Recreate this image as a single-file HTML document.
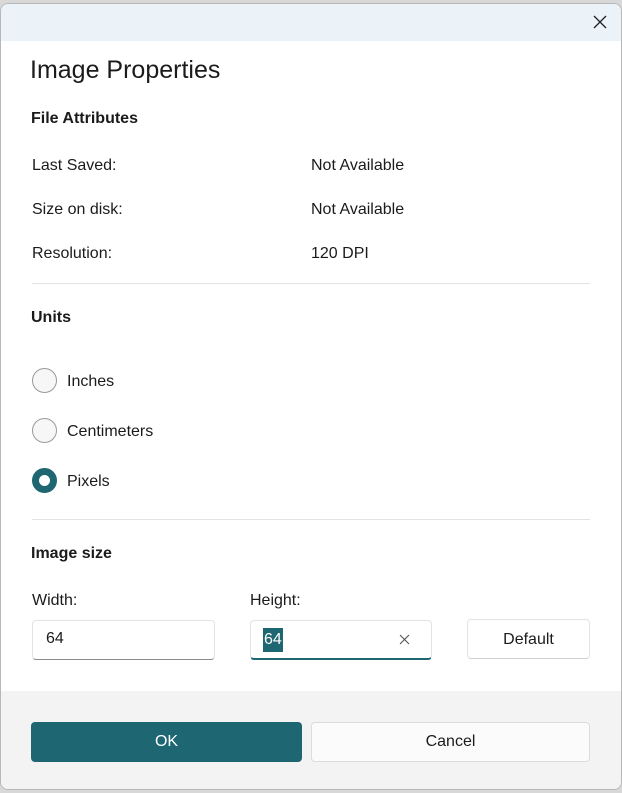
<!DOCTYPE html>
<html><head><style>
*{margin:0;padding:0;box-sizing:border-box}
body{width:622px;height:793px;background:#d8d8d8;font-family:"Liberation Sans",sans-serif;color:#1b1b1b;position:relative;overflow:hidden;font-size:16px}
.dlg{position:absolute;left:0px;top:3px;width:622px;height:787px;background:#fff;border:1px solid #b8b8b8;border-radius:8px;overflow:hidden}
.tb{position:absolute;left:0;top:0;width:100%;height:37px;background:#ebf3f9}
.a{position:absolute;white-space:nowrap}
.hr{position:absolute;left:31px;width:558px;height:1px;background:#e3e3e3}
.rad{position:absolute;left:31px;width:25px;height:25px;border-radius:50%;border:1px solid #9a9a9a;background:#f7f7f7}
.box{position:absolute;height:40px;background:#fff;border:1px solid #e3e3e3;border-bottom:1px solid #8a8a8a;border-radius:4px}
.ft{position:absolute;left:0;top:687px;width:100%;height:100px;background:#f3f3f3}
</style></head><body>
<div class="dlg">
<div class="tb"></div>
<svg class="a" style="left:592px;top:11px" width="14" height="14"><path d="M1 1L13 13M13 1L1 13" stroke="#222" stroke-width="1.3"/></svg>
<div class="a" style="left:29px;top:52px;font-size:25px">Image Properties</div>
<div class="a" style="left:30px;top:106px;font-size:16px;font-weight:bold">File Attributes</div>
<div class="a" style="left:31px;top:153px">Last Saved:</div>
<div class="a" style="left:310px;top:153px">Not Available</div>
<div class="a" style="left:31px;top:197px">Size on disk:</div>
<div class="a" style="left:310px;top:197px">Not Available</div>
<div class="a" style="left:31px;top:241px">Resolution:</div>
<div class="a" style="left:310px;top:241px">120 DPI</div>
<div class="hr" style="top:279px"></div>
<div class="a" style="left:30px;top:305px;font-weight:bold">Units</div>
<div class="rad" style="top:364px"></div><div class="a" style="left:66px;top:369px">Inches</div>
<div class="rad" style="top:414px"></div><div class="a" style="left:66px;top:419px">Centimeters</div>
<div class="rad" style="top:464px;border:7px solid #1e6672;background:#fff"></div><div class="a" style="left:66px;top:469px">Pixels</div>
<div class="hr" style="top:515px"></div>
<div class="a" style="left:30px;top:541px;font-weight:bold">Image size</div>
<div class="a" style="left:31px;top:588px">Width:</div>
<div class="a" style="left:249px;top:588px">Height:</div>
<div class="box" style="left:31px;top:616px;width:183px"></div>
<div class="a" style="left:45px;top:626px">64</div>
<div class="box" style="left:249px;top:616px;width:182px;border-bottom:2px solid #1e6672"></div>
<div class="a" style="left:262px;top:624px;background:#1e6672;color:#fff;padding:2px 1px;line-height:20px">64</div>
<svg class="a" style="left:398px;top:630px" width="11" height="11"><path d="M1 1L10 10M10 1L1 10" stroke="#555" stroke-width="1.1"/></svg>
<div class="box" style="left:466px;top:615px;width:123px;height:40px;border-bottom:1px solid #d0d0d0"></div>
<div class="a" style="left:466px;top:627px;width:123px;text-align:center">Default</div>
<div class="ft"></div>
<div class="a" style="left:30px;top:718px;width:271px;height:40px;background:#1e6672;border-radius:4px;color:#fff;text-align:center;line-height:40px">OK</div>
<div class="a" style="left:310px;top:718px;width:279px;height:40px;background:#fbfbfb;border:1px solid #dcdcdc;border-radius:4px;text-align:center;line-height:38px">Cancel</div>
</div>
</body></html>
